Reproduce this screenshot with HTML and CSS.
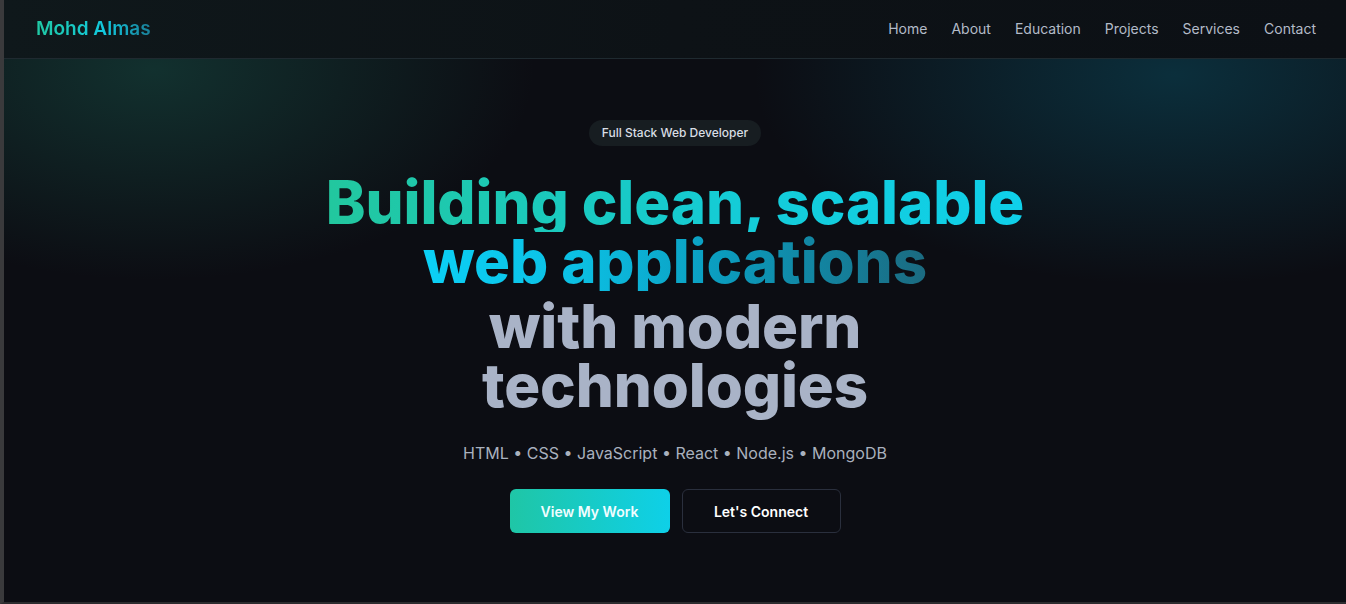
FILE: index.html
```html
<!DOCTYPE html>
<html lang="en">
<head>
<meta charset="utf-8">
<title>Mohd Almas</title>
<link rel="stylesheet" href="styles.css">
</head>
<body>
<div class="frame">
  <header class="site-header">
    <a class="logo" href="#">Mohd Almas</a>
    <nav class="nav">
      <a href="#">Home</a>
      <a href="#">About</a>
      <a href="#">Education</a>
      <a href="#">Projects</a>
      <a href="#">Services</a>
      <a href="#">Contact</a>
    </nav>
  </header>
  <main class="hero">
    <span class="badge">Full Stack Web Developer</span>
    <h1 class="title">
      <span class="title-grad">
        <span class="line grad-1">Building clean, scalable</span>
        <span class="line grad-2">web applications</span>
      </span>
      <span class="title-muted">
        <span class="line">with modern</span>
        <span class="line">technologies</span>
      </span>
    </h1>
    <p class="stack">HTML • CSS • JavaScript • React • Node.js • MongoDB</p>
    <div class="actions">
      <a class="btn btn-primary" href="#">View My Work</a>
      <a class="btn btn-outline" href="#">Let's Connect</a>
    </div>
  </main>
</div>
</body>
</html>
```

FILE: styles.css
```css
* { box-sizing: border-box; }

html, body {
  margin: 0;
  height: 100%;
}

body {
  background: #0c0d13;
  font-family: "Inter", "Liberation Sans", sans-serif;
  color: #e6e9ef;
  overflow: hidden;
}

a { text-decoration: none; color: inherit; }

.frame {
  height: 604px;
  border-left: 4px solid #3a3a3c;
  border-bottom: 2px solid #2c2c2f;
  display: flex;
  flex-direction: column;
  background:
    radial-gradient(ellipse 380px 210px at 150px 70px, rgba(24, 84, 74, 0.5), rgba(24, 84, 74, 0) 100%),
    radial-gradient(ellipse 420px 210px at 1170px 75px, rgba(10, 80, 100, 0.5), rgba(10, 80, 100, 0) 100%),
    #0c0d13;
}

.site-header {
  height: 59px;
  flex: none;
  display: flex;
  align-items: center;
  justify-content: space-between;
  padding: 0 30px 0 32px;
  background: linear-gradient(90deg, #0f181b 0%, #0d1216 50%, #0c1015 100%);
  border-bottom: 1px solid #1f2a30;
}

.logo {
  font-family: "Inter", sans-serif;
  font-weight: 600;
  font-size: 19px;
  letter-spacing: 0;
  padding-bottom: 2px;
  background: linear-gradient(90deg, #20c9a4 0%, #12c8de 60%, #1a7e98 100%);
  -webkit-background-clip: text;
  background-clip: text;
  color: transparent;
}

.nav {
  display: flex;
  gap: 24px;
  font-size: 14px;
  color: #b3bbc8;
  padding-bottom: 2px;
}

.hero {
  flex: 1;
  display: flex;
  flex-direction: column;
  align-items: center;
  padding-top: 61px;
}

.badge {
  display: inline-block;
  height: 26px;
  line-height: 26px;
  padding: 0 13px;
  border-radius: 13px;
  background: #171d21;
  color: #d9dee5;
  font-size: 12px;
  font-weight: 500;
}

.title {
  margin: 27px 0 0;
  display: flex;
  flex-direction: column;
  align-items: center;
  font-family: "Inter", sans-serif;
  font-weight: 800;
  font-size: 60px;
  letter-spacing: -0.1px;
  text-align: center;
}

.title-grad, .title-muted {
  display: flex;
  flex-direction: column;
  align-items: center;
  line-height: 59px;
}

.title-muted {
  margin-top: 6px;
  color: #a9b3c7;
}

.line { display: block; width: fit-content; }

.grad-1, .grad-2 {
  -webkit-background-clip: text;
  background-clip: text;
  color: transparent;
}

.grad-1 {
  background-image: linear-gradient(90deg, #22c79e 0%, #14ccd8 60%, #0fd0ea 100%);
}

.grad-2 {
  background-image: linear-gradient(90deg, #0bd0f6 0%, #0cc0e4 30%, #0b9bbd 60%, #1b6a80 100%);
}

.stack {
  margin: 28px 0 0;
  font-size: 16px;
  color: #a9b1be;
}

.actions {
  display: flex;
  gap: 12px;
  margin-top: 26px;
}

.btn {
  display: flex;
  align-items: center;
  justify-content: center;
  height: 44px;
  border-radius: 6px;
  font-size: 14px;
  font-weight: 600;
}

.btn-primary {
  width: 160px;
  background: linear-gradient(90deg, #1fc6a6 0%, #0ed0e8 100%);
  color: #f1fdff;
}

.btn-outline {
  width: 159px;
  border: 1px solid #2a2f3d;
  color: #ffffff;
  background: #0c0d13;
}
```
